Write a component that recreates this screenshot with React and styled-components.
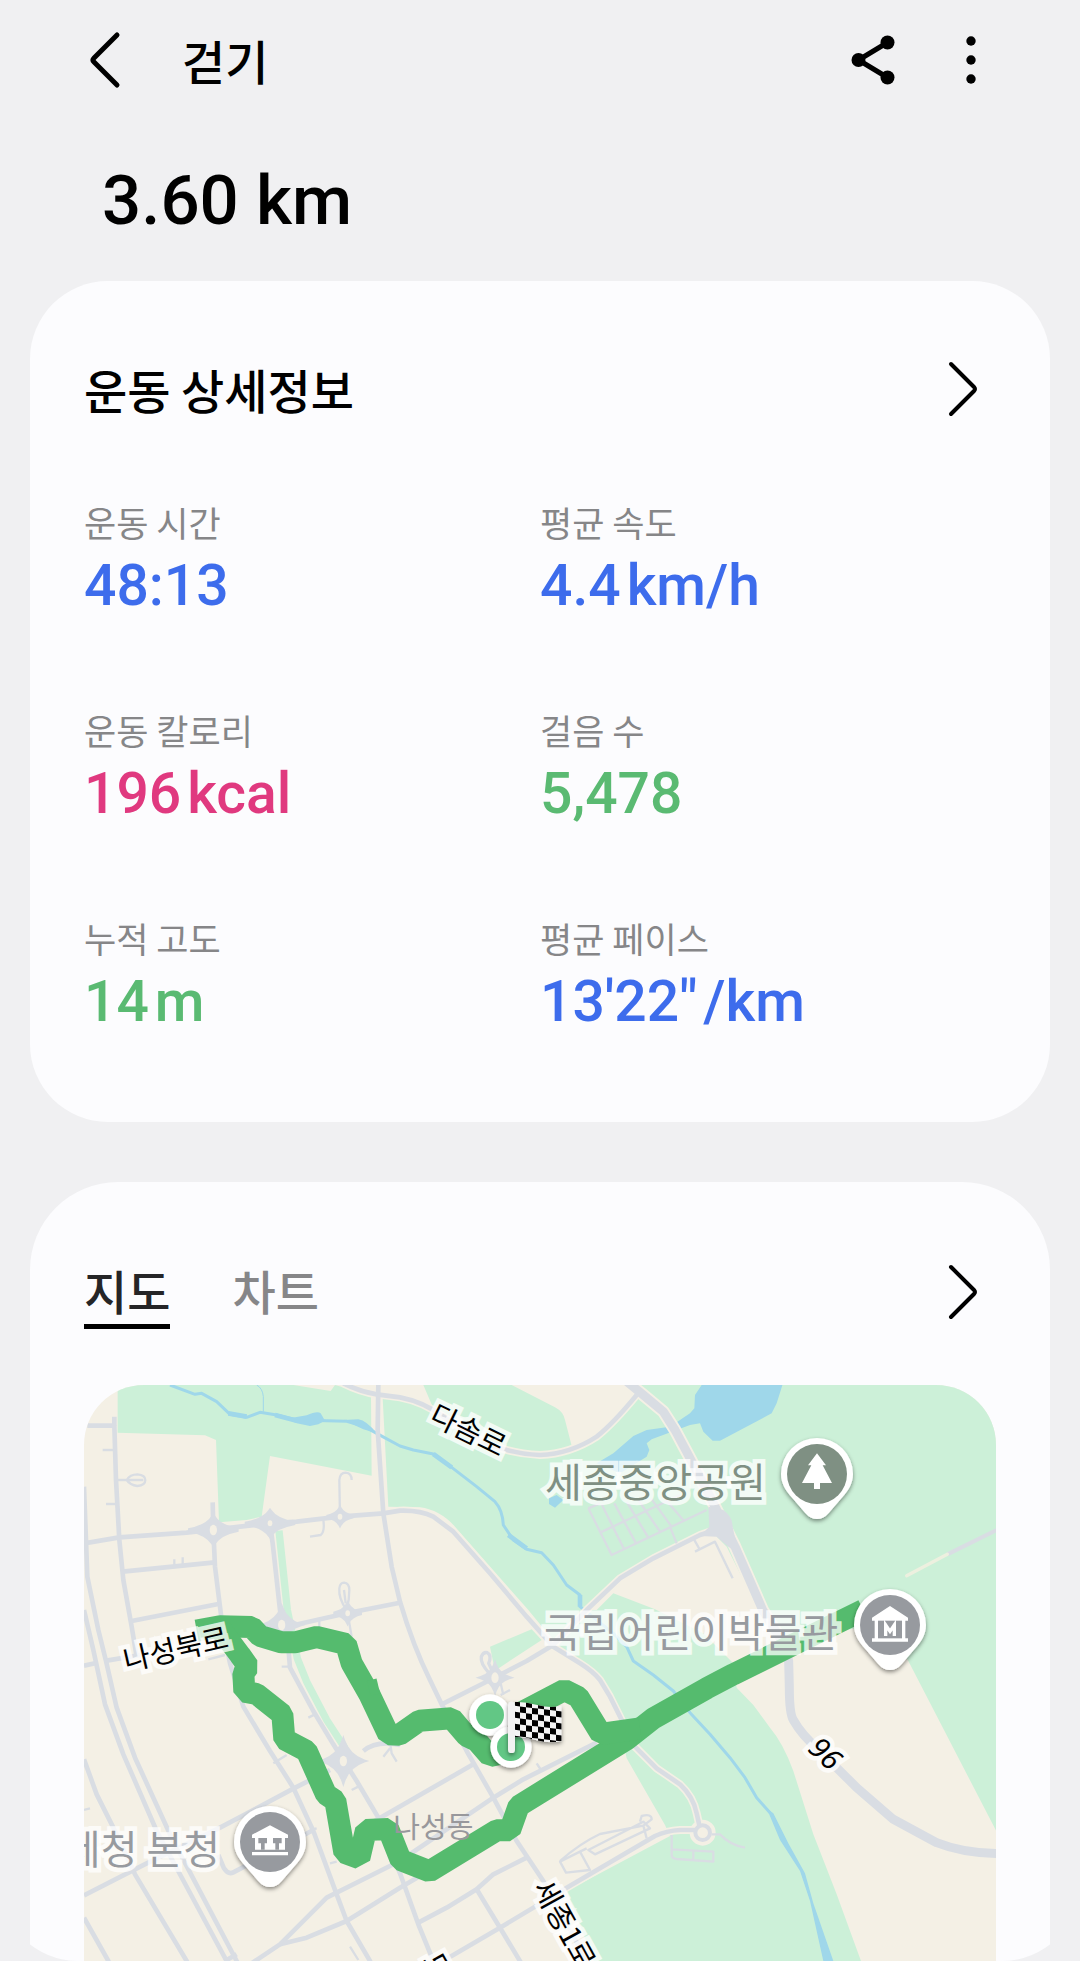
import React from "react";
import styled, { createGlobalStyle } from "styled-components";

const hangul = `"Noto Sans CJK KR", sans-serif`;

const GlobalStyle = createGlobalStyle`
  * { box-sizing: border-box; }
  body {
    margin: 0;
    background: #f0f0f2;
    font-family: Roboto, ${hangul};
    color: #000;
  }
  h1, h2, p, dl, dt, dd { margin: 0; font-weight: inherit; }
`;

const ScrollView = styled.div`
  height: 100vh;
  overflow: hidden;
  border-radius: 0 0 78px 78px;
`;

const TopBar = styled.header`
  display: flex;
  align-items: center;
  height: 120px;
  padding: 0 79px 0 75px;
`;

const IconButton = styled.button`
  display: flex;
  flex: none;
  width: 60px;
  height: 60px;
  padding: 0;
  border: 0;
  background: none;
  color: inherit;
`;

const Actions = styled.div`
  display: flex;
  gap: 38px;
  margin-left: auto;
`;

const Title = styled.h1`
  margin-left: 47px;
  font-family: ${hangul};
  font-size: 47px;
  font-weight: 500;
  line-height: 60px;
`;

const Distance = styled.p`
  padding: 40px 102px 39px;
  font-size: 69px;
  font-weight: 500;
  line-height: 82px;
`;

const Cards = styled.main`
  display: flex;
  flex-direction: column;
  gap: 60px;
  padding: 0 30px;
`;

const Card = styled.section`
  padding: ${(p) => p.$pad};
  border-radius: ${(p) => p.$radius};
  background: #fcfcfe;
`;

const CardHead = styled.div`
  display: flex;
  align-items: center;
  justify-content: space-between;
`;

const CardTitle = styled.h2`
  font-family: ${hangul};
  font-size: 47px;
  font-weight: 500;
  line-height: 60px;
`;

const Metrics = styled.dl`
  display: grid;
  grid-template-columns: 1fr 1fr;
  row-gap: 80px;
  padding-top: 77px;
`;

const Metric = styled.div`
  display: flex;
  flex-direction: column;
`;

const MetricLabel = styled.dt`
  color: #868688;
  font-family: ${hangul};
  font-size: 35px;
  line-height: 52px;
`;

const MetricValue = styled.dd`
  display: flex;
  gap: 6px;
  color: ${(p) => p.$color};
  font-size: 57px;
  font-weight: 500;
  line-height: 76px;
`;

const Tabs = styled.div`
  display: flex;
  gap: 62px;
`;

const Tab = styled.button`
  padding: 0;
  border: 0;
  border-bottom: 5px solid ${(p) => (p.$active ? "#000" : "transparent")};
  background: none;
  color: ${(p) => (p.$active ? "#252527" : "#868688")};
  font-family: ${hangul};
  font-size: 47px;
  font-weight: 500;
  line-height: 69px;
`;

const MapFrame = styled.div`
  margin-top: 56px;
  overflow: hidden;
  border-radius: 60px;
`;

const MapSvg = styled.svg`
  display: block;
  width: 100%;
  height: auto;
  font-family: ${hangul};
`;

const MapLabel = styled.text`
  font-size: ${(p) => (p.$place ? 120 : 87)}px;
  fill: ${(p) => p.$color || "#000"};
  stroke: ${(p) => (p.$plain ? "none" : "rgba(255, 255, 255, 0.75)")};
  stroke-width: 28px;
  stroke-linejoin: miter;
  paint-order: stroke;
`;

const RouteNumber = styled(MapLabel)`
  font-family: "Noto Sans", sans-serif;
  font-style: italic;
`;

const stroke = {
  fill: "none",
  stroke: "currentColor",
  strokeWidth: 5,
  strokeLinecap: "round",
  strokeLinejoin: "round",
};

const BackIcon = () => (
  <svg width="60" height="60" viewBox="0 0 60 60" aria-hidden="true">
    <path d="M42 5 L19 28 Q17 30 19 32 L42 55" {...stroke} />
  </svg>
);

const NextIcon = () => (
  <svg width="60" height="60" viewBox="0 0 60 60" aria-hidden="true">
    <path d="M15 5 L38 28 Q40 30 38 32 L15 55" {...stroke} strokeWidth="4" />
  </svg>
);

const ShareIcon = () => (
  <svg width="60" height="60" viewBox="0 0 60 60" aria-hidden="true">
    <path d="M44.500 12.500 L15.500 30 L44.500 47.500" {...stroke} />
    <circle cx="44.500" cy="12.500" r="7" />
    <circle cx="15.500" cy="30" r="7" />
    <circle cx="44.500" cy="47.500" r="7" />
  </svg>
);

const MoreIcon = () => (
  <svg width="60" height="60" viewBox="0 0 60 60" aria-hidden="true">
    <circle cx="30" cy="11" r="4.700" />
    <circle cx="30" cy="30" r="4.700" />
    <circle cx="30" cy="49" r="4.700" />
  </svg>
);

const LAND = "#f4f0e5";
const PARK = "#ccf0d8";
const WATER = "#9fd7ea";
const ROAD = "#d9dde3";
const ROUTE = "#55bb6e";

const parks = [
  "M113 15 V158 L375 166 L408 180 L417 427 L500 420 L545 410 L570 228 L875 287 L873 52 L800 25 L765 15 L752 33 L640 15Z",
  "M908 0 V55 L925 380 L1020 382 Q1080 390 1125 440 L1345 690 L1390 745 L1480 843 L1540 878 L1590 950 L1620 1040 L1640 1135 L1755 1335 L1770 1368 L1460 1533 L1560 1790 L1620 1935 L2760 1935 V0Z",
  "M1230 800 L1355 748 L1385 780 L1245 872Z",
];

const lands = [
  "M900 0 H1030 V15 L1058 80 L1040 75 L900 45Z",
  "M1295 15 L1425 82 Q1450 95 1455 120 L1475 197 Q1540 180 1610 112 L1672 45 L1650 0 H1295Z",
  "M1520 690 L1620 602 L1720 542 L1860 472 L1900 460 L1940 500 L2070 760 L2125 790 L1960 850 L1870 760 L1725 688 L1600 640 L1550 690Z",
  "M1960 850 L2100 780 L2330 745 L2470 820 L2485 843 L2760 1375 V1935 H2420 L2343 1743 L2270 1543 L2200 1363 L2140 1173 Q2110 1090 2070 1043 L2020 975 L1970 923Z",
];

const highway =
  "M1635 0 L1690 45 L1750 95 L1785 150 L1825 225 L1880 330 L1915 400 L1965 500 L2048 690 L2110 790 L2126 843 L2128 923 Q2128 1000 2140 1020 Q2165 1065 2215 1108 L2330 1223 L2440 1318 L2570 1388 Q2650 1420 2760 1421";

const roads = [
  "M790 10 Q840 35 890 43 L960 52 Q1030 65 1090 110 L1200 180 Q1280 220 1380 225 Q1470 222 1550 170 Q1600 130 1670 45",
  "M22 137 H103 V110 M103 137 L108 300 L118 480 L130 600 L155 740 L170 830",
  "M12 490 L118 472 L320 458 L480 440 L570 430 L650 425 L780 410 L910 400 L960 392 Q1020 390 1060 410 L1120 455 L1230 580 L1340 710 L1420 800 L1500 850 Q1540 875 1560 900 L1590 950 L1665 1100 L1730 1165 L1800 1213 Q1840 1250 1850 1300 L1860 1345",
  "M398 367 L400 450 L405 560 L425 720 L450 850 L490 980 L570 1113 L640 1223 L700 1353 L770 1543 L800 1623 L870 1743 L960 1920",
  "M12 320 L22 590 L55 750 L78 843 L110 983 L165 1133 L270 1363 L470 1743 L570 1930",
  "M12 690 L40 810 L75 973 L130 1123 L230 1353 L440 1743 L540 1930",
  "M12 1138 L50 1243 L100 1343 L165 1483 L320 1743 L420 1930",
  "M12 1613 L85 1743 L180 1930",
  "M128 575 L405 547 M155 723 L415 672 M80 842 L180 825 M12 857 L45 850",
  "M570 430 L578 490 L600 690 L620 740 L630 863 L700 993 L760 1093 L830 1203 L895 1313 L960 1480 L1015 1633 L1060 1743",
  "M895 15 L893 150 L910 400 L935 560 L960 665 Q1000 800 1050 900 L1085 973 L1160 1113 L1240 1253 L1310 1383 L1390 1503 L1530 1760",
  "M620 740 L800 700 L960 668",
  "M1085 973 L1230 900 L1340 843 L1420 795 L1520 690 L1620 595 L1720 535 L1860 465 L1890 455",
  "M12 1546 L200 1450 L420 1343 L640 1226 L750 1170",
  "M415 1425 L432 1465 Q445 1485 460 1477 L700 1350",
  "M500 1760 L600 1693 L690 1603 L740 1553 L960 1443 L1240 1253 L1330 1198 L1550 1088",
  "M600 1693 L680 1673 L800 1623 L960 1523 L1060 1465",
  "M880 1325 L1180 1153",
  "M1015 1628 L1100 1583 L1190 1528 L1240 1483 L1340 1433",
  "M1190 1528 L1260 1643 L1330 1760",
  "M1060 1760 L1260 1643 L1460 1523 L1725 1368 Q1760 1352 1800 1350 H1850",
  "M850 1113 Q890 1080 960 1095",
  "M435 1743 L470 1723",
];

const lanes = [
  "M110 300 H140 Q150 283 172 283 Q196 285 196 300 Q196 316 172 318 Q150 315 140 300 H190",
  "M68 210 H100 M78 372 H105 M283 538 V555 M308 532 V552 M385 838 L435 825",
  "M780 410 L778 300 Q780 278 797 278 Q815 280 815 300 M730 420 Q735 455 722 465 L690 470",
  "M800 690 Q775 655 778 625 Q780 608 792 608 Q808 610 808 630 Q808 660 800 690 M792 630 L797 670 M803 700 L815 770 M718 720 V740",
  "M1525 385 L1595 525 L1880 390 M1560 458 L1800 345 M1525 385 L1560 370 M1565 373 L1632 507 M1603 370 L1668 490 M1640 365 L1705 473 M1675 360 L1740 455 M1713 355 L1775 440 M1745 345 L1812 423 M1770 440 L1790 490",
  "M1845 515 L1905 485 L1958 595 M1842 478 L1860 510",
  "M1440 1445 L1500 1415 L1530 1470 L1458 1478Z M1440 1443 Q1500 1390 1560 1362 L1690 1337 M1525 1410 L1690 1325 L1710 1345 L1545 1423Z M1680 1325 L1685 1308 Q1715 1300 1715 1318 L1690 1337 L1700 1375 M1500 1415 L1520 1405",
  "M1775 1365 V1425 Q1775 1435 1790 1437 L1900 1445 V1415 L1775 1408 M1840 1412 V1440",
  "M1895 1363 H1920 Q1950 1395 1995 1403 M1370 1150 L1385 1173",
  "M580 1150 L620 1125 M685 1013 L705 1003 M605 860 H625 M815 1230 L835 1220 M750 1450 L770 1445 M12 1290 L30 1285 M810 1700 L835 1740 M690 1350 L710 1345",
  "M930 1085 L935 1120 L950 1145 M910 1130 L930 1105",
];

const junctions = [
  [400, 450, 75, 42],
  [570, 430, 75, 38],
  [605, 735, 55, 52],
  [803, 700, 42, 28],
  [780, 410, 40, 25],
  [790, 1143, 62, 62],
  [1245, 893, 42, 40],
];

const streams = [
  ["M270 15 L345 43 L365 40 L410 65 L450 103 L500 112 L540 97 L590 105 L650 120 L800 124 L850 138 L890 160 L960 198 L1000 210 L1060 222 L1115 262 L1190 320 L1245 365 Q1268 390 1270 435 L1300 480 L1340 508 L1385 518 L1420 555 L1460 615 L1500 645 L1500 680 L1600 760 L1640 800 L1660 843 L1720 885 L1780 933 L1830 998 L1890 1063 L1950 1133 L1995 1193 L2030 1253 L2070 1298", 9],
  ["M445 100 L500 110 M1060 222 L1115 262 M1285 465 L1340 505 M585 105 L650 122 M1500 645 V680", 14],
  ["M530 15 Q548 25 550 50 V95", 3],
];

const starPath = ([x, y, rx, ry]) =>
  `M${x - rx} ${y} Q${x - rx / 4} ${y - ry / 4} ${x} ${y - ry} Q${x + rx / 4} ${y - ry / 4} ${x + rx} ${y} Q${x + rx / 4} ${y + ry / 4} ${x} ${y + ry} Q${x - rx / 4} ${y + ry / 4} ${x - rx} ${y}Z`;

const routes = [
  "M350 752 L420 739 L515 741 L540 768 L605 787 L645 787 L710 771 L798 792 L815 850 L868 943 L925 1063 L958 1064 L1018 1022 L1115 1015 L1160 1068 L1190 1082 L1230 1128 L1290 1115",
  "M420 745 L480 825 L505 860 L490 880 L493 935 L530 942 L607 1003 L613 1078 L680 1113 L738 1243 L766 1262 L793 1418 L838 1435 L858 1350 L925 1347 L962 1440 L1048 1474 L1250 1351 L1290 1351 L1316 1278 L1640 1078 L1720 1015 L1880 925 L1960 883 L2350 690",
  "M1310 1005 L1453 930 L1495 951 L1563 1062 L1680 1045",
];

const Pin = ({ x, y, color, children }) => (
  <g transform={`translate(${x} ${y})`}>
    <path
      d="M0 -108 A108 108 0 0 1 108 0 C108 30 92 52 76 70 L36 116 Q20 135 0 135 Q-20 135 -36 116 L-76 70 C-92 52 -108 30 -108 0 A108 108 0 0 1 0 -108Z"
      fill="#fff"
      filter="url(#lift)"
    />
    <circle r="90" fill={color} />
    <g fill="#fff">{children}</g>
  </g>
);

const checks = [];
for (let row = 0; row < 7; row++) {
  for (let col = 0; col < 8; col++) {
    if ((row + col) % 2 === 0) checks.push([col * 18, row * 18]);
  }
}

const RouteMap = () => (
  <MapSvg viewBox="12 15 2736 1920" role="img" aria-label="지도">
    <defs>
      <filter id="lift" x="-20%" y="-20%" width="140%" height="150%">
        <feDropShadow dx="0" dy="6" stdDeviation="6" floodOpacity="0.45" />
      </filter>
      <clipPath id="cloth">
        <path d="M405 122 Q440 122 475 133 Q510 142 545 134 V240 Q510 248 470 238 Q435 226 405 228Z" />
      </clipPath>
    </defs>

    <rect x="0" y="0" width="2760" height="1935" fill={LAND} />
    {parks.map((d) => <path key={d} d={d} fill={PARK} />)}
    {lands.map((d) => <path key={d} d={d} fill={LAND} />)}
    <path d="M597 452 L622 690 L652 835 L680 905 L740 1020 L795 1105" fill="none" stroke={PARK} strokeWidth="22" />

    {streams.map(([d, w]) => (
      <path key={d} d={d} fill="none" stroke={WATER} strokeWidth={w} strokeLinejoin="round" />
    ))}
    <g fill={WATER}>
      <path d="M620 116 L680 106 Q712 92 722 100 L735 122 L715 133 L690 138 L650 130Z M790 120 L835 118 Q860 122 890 160 L850 148Z" />
      <path d="M2060 1285 L2080 1300 L2125 1390 L2175 1480 L2200 1570 L2260 1743 L2300 1935 H2260 L2230 1743 L2190 1563 L2160 1473 L2100 1380Z" />
      <path d="M1865 0 V15 L1845 45 L1843 85 L1830 100 L1770 140 L1700 150 L1660 168 L1600 220 L1550 250 L1620 280 L1700 230 L1708 210 L1700 190 L1715 178 L1830 135 L1860 130 L1870 155 L1898 182 L1920 182 L2075 100 L2090 70 L2112 0Z" />
      <path d="M1407 355 L1430 345 L1450 360 L1425 383 L1407 372Z" />
    </g>

    <g fill="none" stroke={LAND} strokeLinejoin="round">
      <path d={highway} strokeWidth="38" />
      {[roads[0], roads[2], roads[12], roads[20]].map((d) => (
        <path key={d} d={d} strokeWidth="24" />
      ))}
      <circle cx="1868" cy="1358" r="28" strokeWidth="22" />
    </g>
    <g fill="none" stroke={ROAD} strokeLinejoin="round">
      {lanes.map((d) => <path key={d} d={d} strokeWidth="7" />)}
      {roads.map((d) => <path key={d} d={d} strokeWidth="14" />)}
      <path d={highway} strokeWidth="27" />
      <path d="M2602 523 L2750 450" strokeWidth="12" />
      <path d="M2480 587 L2602 523" stroke="#edf0df" strokeWidth="10" strokeLinecap="round" />
      <path d="M1228 880 Q1200 850 1204 830 Q1210 815 1222 818 Q1236 825 1226 850 L1240 880" strokeWidth="10" />
      <path d="M1262 910 L1270 945 M1262 945 L1290 930" strokeWidth="7" />
      <circle cx="1868" cy="1358" r="22" fill={LAND} strokeWidth="12" />
    </g>
    <path d="M1885 380 L1930 390 Q1958 410 1958 440 L1975 520 L1945 500 L1910 470 L1860 468 L1888 440Z" fill={ROAD} />
    {junctions.map((j) => (
      <g key={`${j[0]}-${j[1]}`}>
        <path d={starPath(j)} fill={ROAD} stroke={ROAD} strokeWidth="10" />
        <ellipse cx={j[0]} cy={j[1]} rx={j[3] > 38 ? 11 : 7} ry={j[3] > 38 ? 16 : 9} fill={LAND} />
      </g>
    ))}

    <g fill="none" stroke={ROUTE} strokeWidth="66" strokeLinejoin="bevel">
      {routes.map((d) => <path key={d} d={d} />)}
      <path d="M866 925 L895 918" strokeWidth="46" />
    </g>

    {[[1230, 1005], [1293, 1101]].map(([x, y]) => (
      <g key={x}>
        <circle cx={x} cy={y} r="62" fill="#fff" filter="url(#lift)" />
        <circle cx={x} cy={y} r="42" fill="#62c785" />
      </g>
    ))}
    <g transform="translate(900 843)" filter="url(#lift)">
      <g clipPath="url(#cloth)">
        <rect x="400" y="115" width="150" height="140" fill="#f4f4f4" />
        <g transform="translate(402 122) skewY(7)">
          {checks.map(([x, y]) => (
            <rect key={`${x}-${y}`} x={x} y={y - 6} width="18" height="18" fill="#000" />
          ))}
        </g>
      </g>
      <rect x="384" y="122" width="21" height="154" rx="10" fill="#f2f2f2" />
    </g>

    <MapLabel transform="translate(138 874) rotate(-13)">나성북로</MapLabel>
    <MapLabel transform="translate(1043 126) rotate(26)">다솜로</MapLabel>
    <MapLabel transform="translate(1356 1522) rotate(61)">세종1로</MapLabel>
    <MapLabel transform="translate(1025 1740) rotate(61)">도움3로</MapLabel>
    <RouteNumber transform="translate(2180 1110) rotate(43)">96</RouteNumber>
    <MapLabel x="940" y="1373" $plain $color="#98989c">나성동</MapLabel>
    <MapLabel x="1395" y="350" $place $color="#7f9083">세종중앙공원</MapLabel>
    <MapLabel x="1392" y="800" $place $color="#979a9f">국립어린이박물관</MapLabel>
    <MapLabel x="420" y="1453" $place $color="#979a9f" textAnchor="end">국세청 본청</MapLabel>

    <Pin x={2211} y={282} color="#7f9083">
      <path d="M0 -62 L27 -26 H17 L45 27 H9 V45 H-9 V27 H-45 L-17 -26 H-27Z" />
    </Pin>
    <Pin x={2430} y={735} color="#979a9f">
      <path d="M0 -57 L54 -22 V-13 H46 V40 H54 V50 H-54 V40 H-46 V-13 H-54 V-22Z" />
      <path d="M-36 -13 H36 V40 H-36Z" fill="#979a9f" />
      <path d="M-13 33 V0 L0 19 L13 0 V33" fill="none" stroke="#fff" strokeWidth="10" />
    </Pin>
    <Pin x={570} y={1386} color="#979a9f">
      <path d="M0 -50 L54 -22 V-12 H45 V23 H-45 V-12 H-54 V-22Z M-54 30 H54 V40 H-54Z" />
      <path d="M-35 -12 H-9 V4 H-16 V23 H-27 V4 H-35Z M9 -12 H35 V4 H27 V23 H16 V4 H9Z" fill="#979a9f" />
    </Pin>
  </MapSvg>
);

const BLUE = "#3d6cec";
const GREEN = "#5aba72";
const PINK = "#e0397f";

const metrics = [
  { label: "운동 시간", value: "48:13", color: BLUE },
  { label: "평균 속도", value: "4.4", unit: "km/h", color: BLUE },
  { label: "운동 칼로리", value: "196", unit: "kcal", color: PINK },
  { label: "걸음 수", value: "5,478", color: GREEN },
  { label: "누적 고도", value: "14", unit: "m", color: GREEN },
  { label: "평균 페이스", value: "13'22\"", unit: "/km", color: BLUE },
];

export default function App() {
  return (
    <>
      <GlobalStyle />
      <ScrollView>
        <TopBar>
          <IconButton aria-label="뒤로"><BackIcon /></IconButton>
          <Title>걷기</Title>
          <Actions>
            <IconButton aria-label="공유"><ShareIcon /></IconButton>
            <IconButton aria-label="더보기"><MoreIcon /></IconButton>
          </Actions>
        </TopBar>
        <Distance>3.60 km</Distance>
        <Cards>
          <Card $pad="78px 54px 82px" $radius="78px">
            <CardHead>
              <CardTitle>운동 상세정보</CardTitle>
              <IconButton aria-label="운동 상세정보 열기"><NextIcon /></IconButton>
            </CardHead>
            <Metrics>
              {metrics.map((m) => (
                <Metric key={m.label}>
                  <MetricLabel>{m.label}</MetricLabel>
                  <MetricValue $color={m.color}>
                    <span>{m.value}</span>
                    {m.unit && <span>{m.unit}</span>}
                  </MetricValue>
                </Metric>
              ))}
            </Metrics>
          </Card>
          <Card $pad="73px 54px" $radius="88px">
            <CardHead>
              <Tabs role="tablist">
                <Tab role="tab" aria-selected="true" $active>지도</Tab>
                <Tab role="tab" aria-selected="false">차트</Tab>
              </Tabs>
              <IconButton aria-label="지도 열기"><NextIcon /></IconButton>
            </CardHead>
            <MapFrame>
              <RouteMap />
            </MapFrame>
          </Card>
        </Cards>
      </ScrollView>
    </>
  );
}
